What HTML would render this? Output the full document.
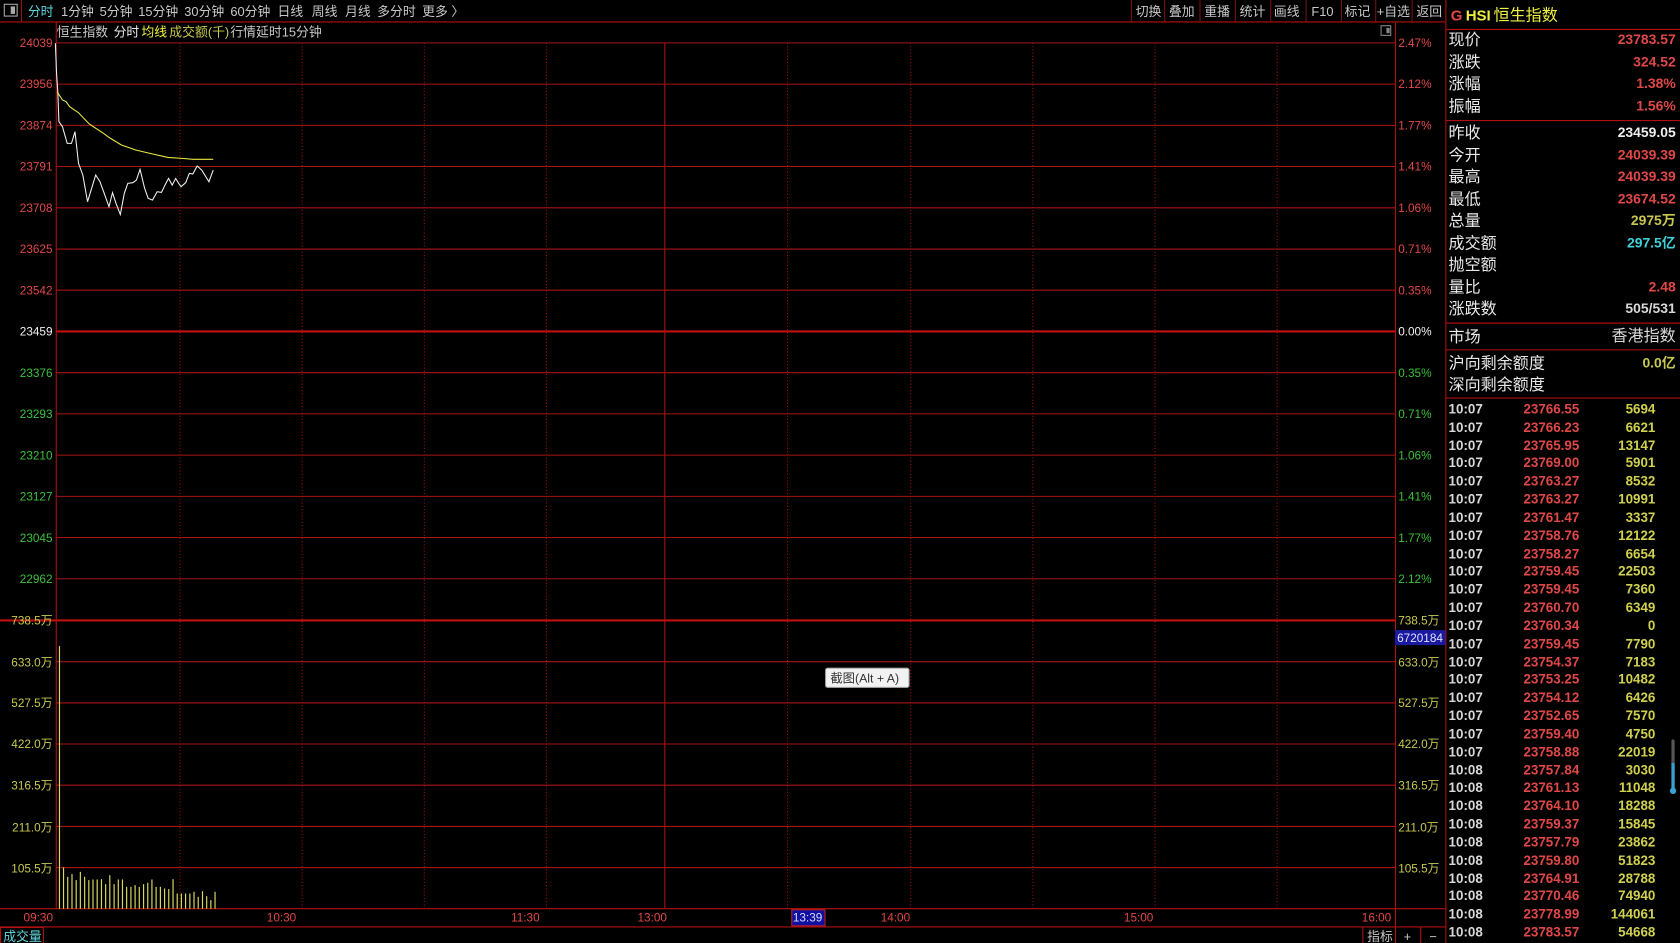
<!DOCTYPE html>
<html><head><meta charset="utf-8"><style>
html,body{margin:0;padding:0;background:#000;width:1680px;height:943px;overflow:hidden}
svg{display:block}
text{font-family:"Liberation Sans","Noto Sans CJK SC",sans-serif}
</style></head><body>
<svg width="1680" height="943" viewBox="0 0 1568 880" preserveAspectRatio="none" xmlns="http://www.w3.org/2000/svg">
<rect width="1568" height="880" fill="#000"/>
<!-- nav -->
<g font-size="12" fill="#c8c8c8">
<rect x="4" y="4" width="12" height="11" fill="none" stroke="#aaa"/><rect x="10" y="6" width="4" height="7" fill="#aaa"/>
<line x1="20" y1="0" x2="20" y2="20" stroke="#a01010"/>
<text x="26" y="15" fill="#5fd7e0">分时</text>
<text x="57" y="15">1分钟</text><text x="93" y="15">5分钟</text><text x="129" y="15">15分钟</text>
<text x="172" y="15">30分钟</text><text x="215" y="15">60分钟</text><text x="259" y="15">日线</text>
<text x="291" y="15">周线</text><text x="322" y="15">月线</text><text x="352" y="15">多分时</text><text x="394" y="15">更多 〉</text>
<text x="1060" y="15">切换</text><text x="1091" y="15">叠加</text><text x="1124" y="15">重播</text>
<text x="1157" y="15">统计</text><text x="1189" y="15">画线</text><text x="1224" y="15">F10</text>
<text x="1255" y="15">标记</text><text x="1285" y="15">+自选</text><text x="1322" y="15">返回</text>
</g>
<g stroke="#7a1010">
<line x1="1056" y1="0" x2="1056" y2="20"/><line x1="1087" y1="0" x2="1087" y2="20"/><line x1="1120" y1="0" x2="1120" y2="20"/>
<line x1="1153" y1="0" x2="1153" y2="20"/><line x1="1186" y1="0" x2="1186" y2="20"/><line x1="1219" y1="0" x2="1219" y2="20"/>
<line x1="1252" y1="0" x2="1252" y2="20"/><line x1="1284" y1="0" x2="1284" y2="20"/><line x1="1318" y1="0" x2="1318" y2="20"/>
</g>
<line x1="0" y1="20.5" x2="1349" y2="20.5" stroke="#b01010"/>
<!-- chart header -->
<text x="53" y="34" font-size="12" fill="#c8c8c8">恒生指数</text>
<text x="106" y="34" font-size="12" fill="#e8e8e8">分时</text>
<text x="132" y="34" font-size="12" fill="#f0f040">均线</text>
<text x="158" y="34" font-size="12" fill="#c8c850">成交额(千)</text>
<text x="215" y="34" font-size="12" fill="#c8c8c8">行情延时15分钟</text>
<rect x="1289" y="24" width="9" height="9" fill="none" stroke="#888"/><rect x="1294" y="26" width="3" height="5" fill="#888"/>
<!-- grid horizontal -->
<g stroke="#a81414" stroke-width="1">
<line x1="52" y1="40" x2="1302" y2="40"/><line x1="52" y1="78.5" x2="1302" y2="78.5"/><line x1="52" y1="117" x2="1302" y2="117"/>
<line x1="52" y1="155.4" x2="1302" y2="155.4"/><line x1="52" y1="193.9" x2="1302" y2="193.9"/><line x1="52" y1="232.4" x2="1302" y2="232.4"/>
<line x1="52" y1="270.8" x2="1302" y2="270.8"/>
<line x1="52" y1="347.8" x2="1302" y2="347.8"/><line x1="52" y1="386.2" x2="1302" y2="386.2"/><line x1="52" y1="424.7" x2="1302" y2="424.7"/>
<line x1="52" y1="463.2" x2="1302" y2="463.2"/><line x1="52" y1="501.6" x2="1302" y2="501.6"/><line x1="52" y1="540.1" x2="1302" y2="540.1"/>
<line x1="52" y1="617.5" x2="1302" y2="617.5"/><line x1="52" y1="656" x2="1302" y2="656"/><line x1="52" y1="694.3" x2="1302" y2="694.3"/>
<line x1="52" y1="732.7" x2="1302" y2="732.7"/><line x1="52" y1="771.2" x2="1302" y2="771.2"/><line x1="52" y1="809.6" x2="1302" y2="809.6"/>
</g>
<line x1="52" y1="309.3" x2="1302" y2="309.3" stroke="#c01010" stroke-width="2"/>
<line x1="0" y1="579" x2="1302" y2="579" stroke="#c01010" stroke-width="2"/>
<line x1="0" y1="848" x2="1349" y2="848" stroke="#b01010"/>
<line x1="0" y1="865" x2="1349" y2="865" stroke="#b01010"/>
<!-- vertical -->
<g stroke="#a01010" stroke-dasharray="1,2">
<line x1="168" y1="40" x2="168" y2="848"/>
<line x1="282" y1="40" x2="282" y2="848"/><line x1="396" y1="40" x2="396" y2="848"/><line x1="510" y1="40" x2="510" y2="848"/>
<line x1="735" y1="40" x2="735" y2="848"/><line x1="850" y1="40" x2="850" y2="848"/><line x1="964" y1="40" x2="964" y2="848"/>
<line x1="1078" y1="40" x2="1078" y2="848"/><line x1="1192" y1="40" x2="1192" y2="848"/>
</g>
<line x1="620.5" y1="40" x2="620.5" y2="848" stroke="#b01010"/>
<line x1="52.5" y1="21" x2="52.5" y2="848" stroke="#b01010"/>
<line x1="1302.5" y1="21" x2="1302.5" y2="880" stroke="#b01010"/>
<line x1="1349.5" y1="0" x2="1349.5" y2="880" stroke="#b01010"/>
<!-- left labels -->
<g font-size="11" text-anchor="end">
<g fill="#e04848">
<text x="49" y="44">24039</text><text x="49" y="82">23956</text><text x="49" y="121">23874</text><text x="49" y="159">23791</text>
<text x="49" y="198">23708</text><text x="49" y="236">23625</text><text x="49" y="275">23542</text></g>
<text x="49" y="313" fill="#f0f0f0">23459</text>
<g fill="#3cc03c">
<text x="49" y="352">23376</text><text x="49" y="390">23293</text><text x="49" y="429">23210</text><text x="49" y="467">23127</text>
<text x="49" y="506">23045</text><text x="49" y="544">22962</text></g>
<g fill="#c8c850">
<text x="49" y="583">738.5万</text><text x="49" y="622">633.0万</text><text x="49" y="660">527.5万</text><text x="49" y="698">422.0万</text>
<text x="49" y="737">316.5万</text><text x="49" y="776">211.0万</text><text x="49" y="814">105.5万</text></g>
</g>
<!-- right labels -->
<g font-size="11">
<g fill="#e04848">
<text x="1305" y="44">2.47%</text><text x="1305" y="82">2.12%</text><text x="1305" y="121">1.77%</text><text x="1305" y="159">1.41%</text>
<text x="1305" y="198">1.06%</text><text x="1305" y="236">0.71%</text><text x="1305" y="275">0.35%</text></g>
<text x="1305" y="313" fill="#f0f0f0">0.00%</text>
<g fill="#3cc03c">
<text x="1305" y="352">0.35%</text><text x="1305" y="390">0.71%</text><text x="1305" y="429">1.06%</text><text x="1305" y="467">1.41%</text>
<text x="1305" y="506">1.77%</text><text x="1305" y="544">2.12%</text></g>
<g fill="#c8c850">
<text x="1305" y="583">738.5万</text><text x="1305" y="622">633.0万</text><text x="1305" y="660">527.5万</text><text x="1305" y="698">422.0万</text>
<text x="1305" y="737">316.5万</text><text x="1305" y="776">211.0万</text><text x="1305" y="814">105.5万</text></g>
</g>
<rect x="1302" y="588" width="47" height="14" fill="#1a1aa0"/>
<text x="1304" y="599" font-size="11" fill="#e0e0ff">6720184</text>
<!-- lines -->
<polyline fill="none" stroke="#f0f0f0" stroke-width="1" points="51.7,40.4 52.7,66.9 54,87.1 55,113.6 58.3,118.2 62.7,133.8 66.7,133.8 70,122.9 73.3,152.5 77.3,163.3 81.7,188.2 86,174.2 89.3,163.3 93.3,169.6 97.3,180.5 101.7,192.9 105,179.8 108.3,189.8 112.3,200.1 116,180.5 119.3,171.1 124,170.5 127.3,168 130.7,158.1 135,175.8 138.3,185.1 142.3,186.7 146.7,178.9 150.7,179.5 154,172.7 157.3,166.5 160.7,172.7 164,166.5 166.7,171.1 169,174.2 173.3,170.5 176.7,161.8 180,162.4 184,154.9 188.3,158.7 195,169.6 199,158.7"/>
<polyline fill="none" stroke="#e8e840" stroke-width="1" points="53.3,85.6 58.3,93.3 61.7,94.9 65,99.6 73.3,105.2 83.3,115.7 96.7,124.5 101.7,128.2 113.3,135.3 126.7,140 140,143.1 156.7,146.9 170,147.8 180,148.7 199,148.7"/>
<!-- volume bars -->
<g stroke="#d8d860" stroke-width="1.1">
<line x1="55.5" y1="603" x2="55.5" y2="848"/>
<line x1="59.3" y1="809.5" x2="59.3" y2="848"/><line x1="63.2" y1="818.2" x2="63.2" y2="848"/><line x1="67.2" y1="815.7" x2="67.2" y2="848"/>
<line x1="71.1" y1="821.3" x2="71.1" y2="848"/><line x1="75" y1="813.6" x2="75" y2="848"/><line x1="79" y1="818.2" x2="79" y2="848"/>
<line x1="82.9" y1="821.3" x2="82.9" y2="848"/><line x1="86.8" y1="820.7" x2="86.8" y2="848"/><line x1="90.7" y1="820.7" x2="90.7" y2="848"/>
<line x1="94.7" y1="820.4" x2="94.7" y2="848"/><line x1="98.6" y1="825.1" x2="98.6" y2="848"/><line x1="102.5" y1="816.7" x2="102.5" y2="848"/>
<line x1="106.5" y1="825.1" x2="106.5" y2="848"/><line x1="110.4" y1="820.7" x2="110.4" y2="848"/><line x1="114.3" y1="820.7" x2="114.3" y2="848"/>
<line x1="118.2" y1="827.6" x2="118.2" y2="848"/><line x1="122.2" y1="827.6" x2="122.2" y2="848"/><line x1="126.1" y1="826" x2="126.1" y2="848"/>
<line x1="130" y1="827.6" x2="130" y2="848"/><line x1="134" y1="825.1" x2="134" y2="848"/><line x1="137.9" y1="823.8" x2="137.9" y2="848"/>
<line x1="141.8" y1="820.7" x2="141.8" y2="848"/><line x1="145.7" y1="827.6" x2="145.7" y2="848"/><line x1="149.7" y1="827.6" x2="149.7" y2="848"/>
<line x1="153.6" y1="829.1" x2="153.6" y2="848"/><line x1="157.5" y1="829.7" x2="157.5" y2="848"/><line x1="161.5" y1="820.4" x2="161.5" y2="848"/>
<line x1="165.4" y1="833.8" x2="165.4" y2="848"/><line x1="169.3" y1="833.8" x2="169.3" y2="848"/><line x1="173.2" y1="833.8" x2="173.2" y2="848"/>
<line x1="177.2" y1="833.8" x2="177.2" y2="848"/><line x1="181.1" y1="832.2" x2="181.1" y2="848"/><line x1="185" y1="836.9" x2="185" y2="848"/>
<line x1="189" y1="831.6" x2="189" y2="848"/><line x1="192.9" y1="836.3" x2="192.9" y2="848"/><line x1="196.8" y1="840" x2="196.8" y2="848"/>
<line x1="200.7" y1="832.2" x2="200.7" y2="848"/>
</g>
<!-- tooltip -->
<rect x="770.5" y="623.5" width="78" height="18" rx="2" fill="#f2f2f2" stroke="#999"/>
<text x="775" y="637" font-size="11.5" fill="#333">截图(Alt + A)</text>
<!-- time axis -->
<g font-size="11" fill="#e04848">
<text x="22" y="860">09:30</text><text x="249" y="860">10:30</text><text x="477" y="860">11:30</text>
<text x="595" y="860">13:00</text><text x="822" y="860">14:00</text><text x="1049" y="860">15:00</text><text x="1271" y="860">16:00</text>
</g>
<rect x="739" y="849" width="31" height="15" fill="#1010a0" stroke="#c02020"/>
<text x="740" y="860" font-size="11" fill="#d8d8ff">13:39</text>
<!-- bottom bar -->
<rect x="0.5" y="865.5" width="40" height="15" fill="none" stroke="#b01010"/>
<text x="3" y="878" font-size="12" fill="#5fd7e0">成交量</text>
<line x1="1272" y1="865" x2="1272" y2="880" stroke="#b01010"/>
<line x1="1326" y1="865" x2="1326" y2="880" stroke="#b01010"/>
<text x="1276" y="878" font-size="12" fill="#c8c8c8">指标</text>
<text x="1310" y="878" font-size="12" fill="#c8c8c8">+</text>
<text x="1334" y="878" font-size="12" fill="#c8c8c8">−</text>
<!-- right panel -->
<text x="1354" y="19" font-size="14" fill="#e04848" font-weight="bold">G</text>
<text x="1368" y="19" font-size="14" fill="#f0f040" font-weight="bold">HSI</text>
<text x="1394" y="19" font-size="15" fill="#f0f040">恒生指数</text>
<g stroke="#b01010"><line x1="1350" y1="27.5" x2="1568" y2="27.5"/><line x1="1350" y1="112.5" x2="1568" y2="112.5"/>
<line x1="1350" y1="301.5" x2="1568" y2="301.5"/><line x1="1350" y1="326.5" x2="1568" y2="326.5"/><line x1="1350" y1="371.5" x2="1568" y2="371.5"/></g>
<g font-size="15" fill="#e8e8e8">
<text x="1352" y="42">现价</text><text x="1352" y="63">涨跌</text><text x="1352" y="83">涨幅</text><text x="1352" y="104">振幅</text>
<text x="1352" y="129">昨收</text><text x="1352" y="150">今开</text><text x="1352" y="170">最高</text><text x="1352" y="191">最低</text>
<text x="1352" y="211">总量</text><text x="1352" y="232">成交额</text><text x="1352" y="252">抛空额</text><text x="1352" y="273">量比</text>
<text x="1352" y="293">涨跌数</text><text x="1352" y="319">市场</text><text x="1352" y="344">沪向剩余额度</text><text x="1352" y="364">深向剩余额度</text>
</g>
<g font-size="13" font-weight="bold" text-anchor="end">
<text x="1564" y="41" fill="#e04848">23783.57</text><text x="1564" y="62" fill="#e04848">324.52</text>
<text x="1564" y="82" fill="#e04848">1.38%</text><text x="1564" y="103" fill="#e04848">1.56%</text>
<text x="1564" y="128" fill="#f0f0f0">23459.05</text><text x="1564" y="149" fill="#e04848">24039.39</text>
<text x="1564" y="169" fill="#e04848">24039.39</text><text x="1564" y="190" fill="#e04848">23674.52</text>
<text x="1564" y="210" fill="#c8c850">2975万</text><text x="1564" y="231" fill="#40d0d8">297.5亿</text>
<text x="1564" y="272" fill="#e04848">2.48</text><text x="1564" y="292" fill="#d8d8d8">505/531</text>
<text x="1564" y="343" fill="#c8c850">0.0亿</text>
</g>
<text x="1564" y="318" font-size="15" fill="#d8d8d8" text-anchor="end">香港指数</text>
<!-- ticks -->
<g font-size="12.5" font-weight="bold">
<g fill="#d8d8d8">
<text x="1352" y="386">10:07</text><text x="1352" y="403">10:07</text><text x="1352" y="420">10:07</text><text x="1352" y="436">10:07</text>
<text x="1352" y="453">10:07</text><text x="1352" y="470">10:07</text><text x="1352" y="487">10:07</text><text x="1352" y="504">10:07</text>
<text x="1352" y="521">10:07</text><text x="1352" y="537">10:07</text><text x="1352" y="554">10:07</text><text x="1352" y="571">10:07</text>
<text x="1352" y="588">10:07</text><text x="1352" y="605">10:07</text><text x="1352" y="622">10:07</text><text x="1352" y="638">10:07</text>
<text x="1352" y="655">10:07</text><text x="1352" y="672">10:07</text><text x="1352" y="689">10:07</text><text x="1352" y="706">10:07</text>
<text x="1352" y="723">10:08</text><text x="1352" y="739">10:08</text><text x="1352" y="756">10:08</text><text x="1352" y="773">10:08</text>
<text x="1352" y="790">10:08</text><text x="1352" y="807">10:08</text><text x="1352" y="824">10:08</text><text x="1352" y="840">10:08</text>
<text x="1352" y="857">10:08</text><text x="1352" y="874">10:08</text>
</g>
<g fill="#e04848" text-anchor="end">
<text x="1474" y="386">23766.55</text><text x="1474" y="403">23766.23</text><text x="1474" y="420">23765.95</text><text x="1474" y="436">23769.00</text>
<text x="1474" y="453">23763.27</text><text x="1474" y="470">23763.27</text><text x="1474" y="487">23761.47</text><text x="1474" y="504">23758.76</text>
<text x="1474" y="521">23758.27</text><text x="1474" y="537">23759.45</text><text x="1474" y="554">23759.45</text><text x="1474" y="571">23760.70</text>
<text x="1474" y="588">23760.34</text><text x="1474" y="605">23759.45</text><text x="1474" y="622">23754.37</text><text x="1474" y="638">23753.25</text>
<text x="1474" y="655">23754.12</text><text x="1474" y="672">23752.65</text><text x="1474" y="689">23759.40</text><text x="1474" y="706">23758.88</text>
<text x="1474" y="723">23757.84</text><text x="1474" y="739">23761.13</text><text x="1474" y="756">23764.10</text><text x="1474" y="773">23759.37</text>
<text x="1474" y="790">23757.79</text><text x="1474" y="807">23759.80</text><text x="1474" y="824">23764.91</text><text x="1474" y="840">23770.46</text>
<text x="1474" y="857">23778.99</text><text x="1474" y="874">23783.57</text>
</g>
<g fill="#d0d050" text-anchor="end">
<text x="1545" y="386">5694</text><text x="1545" y="403">6621</text><text x="1545" y="420">13147</text><text x="1545" y="436">5901</text>
<text x="1545" y="453">8532</text><text x="1545" y="470">10991</text><text x="1545" y="487">3337</text><text x="1545" y="504">12122</text>
<text x="1545" y="521">6654</text><text x="1545" y="537">22503</text><text x="1545" y="554">7360</text><text x="1545" y="571">6349</text>
<text x="1545" y="588">0</text><text x="1545" y="605">7790</text><text x="1545" y="622">7183</text><text x="1545" y="638">10482</text>
<text x="1545" y="655">6426</text><text x="1545" y="672">7570</text><text x="1545" y="689">4750</text><text x="1545" y="706">22019</text>
<text x="1545" y="723">3030</text><text x="1545" y="739">11048</text><text x="1545" y="756">18288</text><text x="1545" y="773">15845</text>
<text x="1545" y="790">23862</text><text x="1545" y="807">51823</text><text x="1545" y="824">28788</text><text x="1545" y="840">74940</text>
<text x="1545" y="857">144061</text><text x="1545" y="874">54668</text>
</g>
</g>
<!-- scrollbar -->
<rect x="1560" y="690" width="3" height="48" rx="1.5" fill="#555"/>
<rect x="1560" y="712" width="3" height="26" fill="#3aa0d0"/>
<circle cx="1561.5" cy="738" r="3" fill="#3aa0d0"/>
</svg>
</body></html>
